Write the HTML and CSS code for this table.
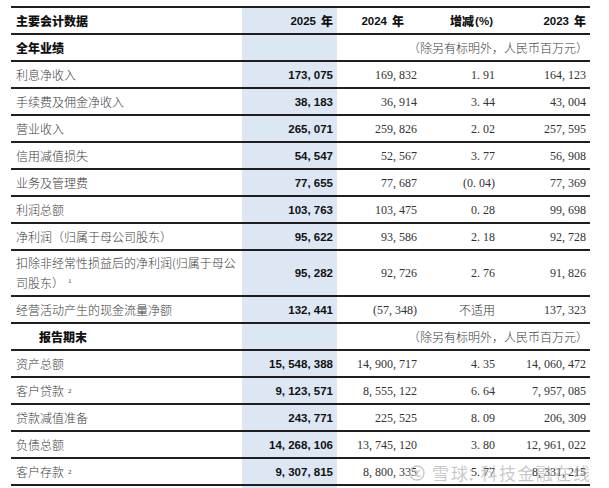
FILE: index.html
```html
<!DOCTYPE html>
<html lang="zh-CN">
<head>
<meta charset="utf-8">
<title>主要会计数据</title>
<link rel="stylesheet" href="styles.css">
</head>
<body>
<div class="sheet">
  <div class="row head">
    <div class="c label">主要会计数据</div>
    <div class="c cur num-b">2025<span class="cjk">年</span></div>
    <div class="c h2024 num-b">2024<span class="cjk">年</span></div>
    <div class="c hchg num-b"><span class="cjk cjk-first">增减</span>(%)</div>
    <div class="c num-b">2023<span class="cjk">年</span></div>
  </div>
  <div class="row">
    <div class="c label sect">全年业绩</div>
    <div class="c cur"></div>
    <div class="c note">（除另有标明外，人民币百万元）</div>
  </div>
  <div class="row">
    <div class="c label">利息净收入</div>
    <div class="c cur num-b">173, 075</div>
    <div class="c num">169, 832</div>
    <div class="c num">1. 91</div>
    <div class="c num">164, 123</div>
  </div>
  <div class="row">
    <div class="c label">手续费及佣金净收入</div>
    <div class="c cur num-b">38, 183</div>
    <div class="c num">36, 914</div>
    <div class="c num">3. 44</div>
    <div class="c num">43, 004</div>
  </div>
  <div class="row">
    <div class="c label">营业收入</div>
    <div class="c cur num-b">265, 071</div>
    <div class="c num">259, 826</div>
    <div class="c num">2. 02</div>
    <div class="c num">257, 595</div>
  </div>
  <div class="row">
    <div class="c label">信用减值损失</div>
    <div class="c cur num-b">54, 547</div>
    <div class="c num">52, 567</div>
    <div class="c num">3. 77</div>
    <div class="c num">56, 908</div>
  </div>
  <div class="row">
    <div class="c label">业务及管理费</div>
    <div class="c cur num-b">77, 655</div>
    <div class="c num">77, 687</div>
    <div class="c num">(0. 04)</div>
    <div class="c num">77, 369</div>
  </div>
  <div class="row">
    <div class="c label">利润总额</div>
    <div class="c cur num-b">103, 763</div>
    <div class="c num">103, 475</div>
    <div class="c num">0. 28</div>
    <div class="c num">99, 698</div>
  </div>
  <div class="row">
    <div class="c label">净利润（归属于母公司股东）</div>
    <div class="c cur num-b">95, 622</div>
    <div class="c num">93, 586</div>
    <div class="c num">2. 18</div>
    <div class="c num">92, 728</div>
  </div>
  <div class="row tall">
    <div class="c label wrap">扣除非经常性损益后的净利润(归属于母公司股东）<sup>1</sup></div>
    <div class="c cur num-b">95, 282</div>
    <div class="c num">92, 726</div>
    <div class="c num">2. 76</div>
    <div class="c num">91, 826</div>
  </div>
  <div class="row">
    <div class="c label">经营活动产生的现金流量净额</div>
    <div class="c cur num-b">132, 441</div>
    <div class="c num">(57, 348)</div>
    <div class="c num cjk-v">不适用</div>
    <div class="c num">137, 323</div>
  </div>
  <div class="row">
    <div class="c label sect indent">报告期末</div>
    <div class="c cur"></div>
    <div class="c note">（除另有标明外，人民币百万元）</div>
  </div>
  <div class="row">
    <div class="c label">资产总额</div>
    <div class="c cur num-b">15, 548, 388</div>
    <div class="c num">14, 900, 717</div>
    <div class="c num">4. 35</div>
    <div class="c num">14, 060, 472</div>
  </div>
  <div class="row">
    <div class="c label">客户贷款<sup>2</sup></div>
    <div class="c cur num-b">9, 123, 571</div>
    <div class="c num">8, 555, 122</div>
    <div class="c num">6. 64</div>
    <div class="c num">7, 957, 085</div>
  </div>
  <div class="row">
    <div class="c label">贷款减值准备</div>
    <div class="c cur num-b">243, 771</div>
    <div class="c num">225, 525</div>
    <div class="c num">8. 09</div>
    <div class="c num">206, 309</div>
  </div>
  <div class="row">
    <div class="c label">负债总额</div>
    <div class="c cur num-b">14, 268, 106</div>
    <div class="c num">13, 745, 120</div>
    <div class="c num">3. 80</div>
    <div class="c num">12, 961, 022</div>
  </div>
  <div class="row">
    <div class="c label">客户存款<sup>2</sup></div>
    <div class="c cur num-b">9, 307, 815</div>
    <div class="c num">8, 800, 335</div>
    <div class="c num">5. 77</div>
    <div class="c num">8, 331, 215</div>
  </div>
  <div class="row tail">
    <div class="c"></div>
    <div class="c cur"></div>
  </div>
  <div class="watermark">
    <svg class="wm-logo" width="16" height="16" viewBox="0 0 16 16" aria-hidden="true">
      <circle cx="8" cy="8" r="7" fill="none" stroke="#c4c4c4" stroke-width="1.4"/>
      <path d="M4.5 5.5 C7 5 9 7 8 9 C7 11 9.5 12 11.5 10.5" fill="none" stroke="#c4c4c4" stroke-width="1.4"/>
      <path d="M11 5 L5 11" fill="none" stroke="#c4c4c4" stroke-width="1.2"/>
    </svg>
    <span class="wm-a">雪球</span><span class="wm-colon">：</span><span>科技金融在线</span>
  </div>
</div>
</body>
</html>
```

FILE: styles.css
```css
html, body {
  margin: 0;
  padding: 0;
  background: #ffffff;
}

body {
  width: 609px;
  height: 488px;
  overflow: hidden;
}

.sheet {
  position: relative;
  margin: 6px 0 0 11px;
  width: 579px;
  border-top: 2px solid #1e1e1e;
  font-family: "Noto Sans CJK SC", "Noto Sans", sans-serif;
  font-size: 12px;
  color: #3a3a3a;
}

.row {
  display: grid;
  grid-template-columns: 231px 95px 84px 78px 91px;
  height: 25px;
  border-bottom: 2px solid #1e1e1e;
}

.row.tall {
  height: 44px;
}

.row.tail {
  height: 6px;
  border-bottom: none;
}

.c {
  display: flex;
  align-items: center;
  justify-content: flex-end;
  padding-right: 4px;
  white-space: nowrap;
  line-height: 20px;
}

.cur {
  background: #dce7f3;
}

.label {
  justify-content: flex-start;
  padding-left: 5px;
  padding-right: 0;
  font-weight: 300;
  color: #3c3c3c;
  padding-top: 1px;
}

.label.wrap {
  white-space: normal;
  display: block;
  padding-top: 2px;
  padding-right: 6px;
  align-self: stretch;
}

.head .label,
.label.sect {
  font-weight: 900;
  color: #111111;
}

.label.indent {
  padding-left: 28px;
}

.num {
  font-family: "Liberation Serif", "Noto Sans CJK SC", serif;
  font-size: 12px;
  color: #333333;
}

.cjk-v {
  font-family: "Noto Sans CJK SC", sans-serif;
  font-weight: 300;
}

.num-b {
  font-family: "Liberation Sans", "Noto Sans CJK SC", sans-serif;
  font-weight: 700;
  font-size: 11.5px;
  color: #111111;
}

.cjk {
  font-family: "Noto Sans CJK SC", sans-serif;
  font-weight: 900;
  font-size: 12px;
  margin-left: 5px;
}

.cjk.cjk-first {
  margin-left: 0;
  margin-right: 1px;
}

.head .h2024 {
  padding-right: 17px;
}

.head .hchg {
  padding-right: 6px;
}

.note {
  grid-column: 3 / 6;
  font-weight: 300;
  color: #3c3c3c;
  padding-right: 2px;
}

sup {
  font-size: 7px;
  line-height: 1;
  vertical-align: super;
  margin-left: 4px;
  font-family: "Liberation Serif", serif;
}

.watermark {
  position: absolute;
  left: 398px;
  top: 452px;
  display: flex;
  align-items: center;
  font-family: "Noto Sans CJK SC", sans-serif;
  font-size: 17px;
  font-weight: 400;
  color: rgba(165, 165, 165, 0.6);
  white-space: nowrap;
  letter-spacing: 1.5px;
}

.wm-logo {
  margin-right: 7px;
  opacity: 0.9;
}

.wm-a {
  letter-spacing: 2px;
}

.wm-colon {
  margin: 0 -5px 0 -3px;
}
```
